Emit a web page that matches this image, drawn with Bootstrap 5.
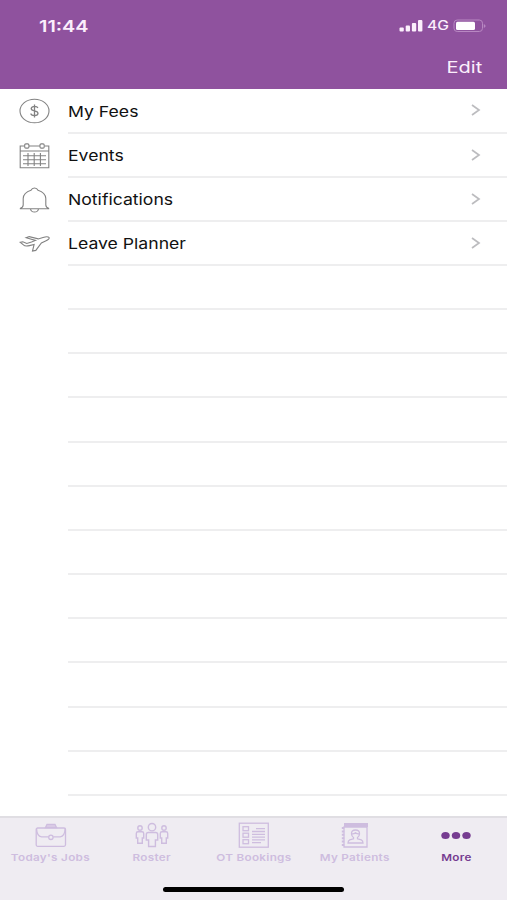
<!DOCTYPE html>
<html lang="en">
<head>
<meta charset="utf-8">
<meta name="viewport" content="width=device-width, initial-scale=1">
<title>More</title>
<link href="https://cdn.jsdelivr.net/npm/bootstrap@5.3.0/dist/css/bootstrap.min.css" rel="stylesheet">
<style>
  body { font-family: Inter, "Liberation Sans", sans-serif; background: #fff; }
  .screen { height: 900px; overflow: hidden; }
  .top-area { height: 89.4px; background: #8f529e; color: #fbeffc; flex: none; }
  .status { height: 52px; padding: 0 20px 0 39px; }
  .wide { display: inline-block; transform: scaleX(1.22); transform-origin: left center; white-space: nowrap; line-height: 1; }
  .clock { font-size: 16px; font-weight: 600; transform: scaleX(1.24); }
  .network { font-size: 12.5px; font-weight: 500; transform: scaleX(1.25); }
  .edit { font-size: 16.4px; transform-origin: right center; }
  .actions { height: 30px; padding-right: 25px; }
  .menu-row { height: 44.17px; flex: none; }
  .menu-icon { width: 68px; padding: 0 0 0 19px; flex: none; }
  .menu-cell { border-bottom: 2px solid #eeeeef; padding-right: 26px; }
  .menu-label { font-size: 15px; font-weight: 400; color: #111; transform: translateY(.6px) scaleX(1.175); }
  .tabs { height: 84px; background: #efecf2; border-top: 2px solid #e0dee3; color: #cebddf; flex: none; position: relative; }
  .tab { flex: 1 1 0; padding-top: 4px; text-decoration: none; color: inherit; }
  .tab-label { font-size: 9.6px; font-weight: 600; transform-origin: center; letter-spacing: .25px; margin-top: 4.4px; }
  .tab-on { color: #763c91; }
  .home-bar { position: absolute; left: 163px; bottom: 8px; width: 181px; height: 5px; border-radius: 3px; background: #000; }
  svg { display: block; fill: none; stroke: currentColor; }
  .menu-icon svg { color: #828282; stroke-width: 1.1; }
  .menu-cell .chev { color: #bcbcbf; stroke-width: 1.7; }
</style>
<script src="https://cdn.jsdelivr.net/npm/bootstrap@5.3.0/dist/js/bootstrap.bundle.min.js"></script>
</head>
<body>
<div class="screen d-flex flex-column">
  <header class="top-area">
    <div class="status d-flex align-items-center justify-content-between">
      <span class="wide clock">11:44</span>
      <div class="d-flex align-items-center">
        <svg width="24" height="14" viewBox="0 0 24 14" style="fill:currentColor;stroke:none"><rect x=".5" y="8.5" width="4.3" height="4" rx="1"/><rect x="6.7" y="6.5" width="4.3" height="6" rx="1"/><rect x="12.900" y="4" width="4.300" height="8.500" rx="1"/><rect x="19" y="1" width="4.400" height="11.500" rx="1"/></svg>
        <span class="wide network ms-1 me-2">4G</span>
        <svg width="34" height="14" viewBox="0 0 34 14"><rect x="1" y="1" width="28.500" height="11.500" rx="3.200" style="stroke:#b888c2"/><rect x="3" y="2.700" width="19" height="8.200" rx="1.500" style="fill:#fff;stroke:none"/><path d="M30.800 5v4q1.800-1 1.800-2t-1.800-2z" style="fill:#b888c2;stroke:none"/></svg>
      </div>
    </div>
    <div class="actions d-flex align-items-center justify-content-end"><span class="wide edit">Edit</span></div>
  </header>

  <main class="flex-grow-1 overflow-hidden d-flex flex-column">
    <div class="menu-row d-flex">
      <div class="menu-icon d-flex align-items-center">
        <svg width="31" height="26" viewBox="0 0 31 26"><ellipse cx="15.5" cy="13" rx="14.5" ry="11.8"/><path stroke-width="1.300" d="M18.900 10Q18.300 8.300 15.500 8.300T12.200 10.400Q12.200 12.200 15.500 12.800T19 15.300Q19 17.600 15.500 17.600T11.900 15.500M15.500 6.500v13"/></svg>
      </div>
      <div class="menu-cell flex-grow-1 d-flex align-items-center justify-content-between"><span class="wide menu-label">My Fees</span><svg class="chev" width="10" height="12" viewBox="0 0 10 12"><path d="M1 1l7 5-7 5"/></svg></div>
    </div>
    <div class="menu-row d-flex">
      <div class="menu-icon d-flex align-items-center">
        <svg width="31" height="26" viewBox="0 0 31 26"><path d="M5.500 3H1.200v21.800h28.600V3h-4.300M10 3h11M1.200 8h28.600M4 12.700h23M4 16.700h23M4 20.700h23M9 10v13M15.200 10v13M21.400 10v13"/><rect x="5.700" y=".9" width="4.200" height="4.200" rx="1.200"/><rect x="21" y=".9" width="4.200" height="4.200" rx="1.200"/></svg>
      </div>
      <div class="menu-cell flex-grow-1 d-flex align-items-center justify-content-between"><span class="wide menu-label">Events</span><svg class="chev" width="10" height="12" viewBox="0 0 10 12"><path d="M1 1l7 5-7 5"/></svg></div>
    </div>
    <div class="menu-row d-flex">
      <div class="menu-icon d-flex align-items-center">
        <svg width="31" height="26" viewBox="0 0 31 26"><path d="M.8 21.700h29.400M1 21.500q3.200-1 3.200-3.500v-6.500Q4.500 5.500 12 3.200q1-2.200 3.500-2.200T19 3.200q7.500 2.300 7.800 8.300V18q0 2.500 3.200 3.500M11.500 22q.5 3 4 3t4-3"/></svg>
      </div>
      <div class="menu-cell flex-grow-1 d-flex align-items-center justify-content-between"><span class="wide menu-label">Notifications</span><svg class="chev" width="10" height="12" viewBox="0 0 10 12"><path d="M1 1l7 5-7 5"/></svg></div>
    </div>
    <div class="menu-row d-flex">
      <div class="menu-icon d-flex align-items-center">
        <svg width="31" height="18" viewBox="0 0 31 18"><path d="M1.200 7.300l2.600-.5 4 1.700 4.700-1.400 4-1.700-9.300-2.700 3-1.100 9 2.300 4.800-1.500q4.600-1.400 6 0 1 1.800-3.400 3.700l-4.200 1.800-5.600 7.500-3.300.6 1.600-6.600-4.700 1.200q-4.300 1-6-.7z"/></svg>
      </div>
      <div class="menu-cell flex-grow-1 d-flex align-items-center justify-content-between"><span class="wide menu-label">Leave Planner</span><svg class="chev" width="10" height="12" viewBox="0 0 10 12"><path d="M1 1l7 5-7 5"/></svg></div>
    </div>
    <div class="menu-row d-flex"><div class="menu-icon"></div><div class="menu-cell flex-grow-1"></div></div>
    <div class="menu-row d-flex"><div class="menu-icon"></div><div class="menu-cell flex-grow-1"></div></div>
    <div class="menu-row d-flex"><div class="menu-icon"></div><div class="menu-cell flex-grow-1"></div></div>
    <div class="menu-row d-flex"><div class="menu-icon"></div><div class="menu-cell flex-grow-1"></div></div>
    <div class="menu-row d-flex"><div class="menu-icon"></div><div class="menu-cell flex-grow-1"></div></div>
    <div class="menu-row d-flex"><div class="menu-icon"></div><div class="menu-cell flex-grow-1"></div></div>
    <div class="menu-row d-flex"><div class="menu-icon"></div><div class="menu-cell flex-grow-1"></div></div>
    <div class="menu-row d-flex"><div class="menu-icon"></div><div class="menu-cell flex-grow-1"></div></div>
    <div class="menu-row d-flex"><div class="menu-icon"></div><div class="menu-cell flex-grow-1"></div></div>
    <div class="menu-row d-flex"><div class="menu-icon"></div><div class="menu-cell flex-grow-1"></div></div>
    <div class="menu-row d-flex"><div class="menu-icon"></div><div class="menu-cell flex-grow-1"></div></div>
    <div class="menu-row d-flex"><div class="menu-icon"></div><div class="menu-cell flex-grow-1"></div></div>
  </main>

  <nav class="tabs d-flex">
    <a class="tab d-flex flex-column align-items-center" href="#">
      <svg width="32" height="27" viewBox="0 0 32 27" stroke-width="1.300"><rect x="1.200" y="6" width="29.300" height="18.300" rx="1.500"/><path d="M1.500 6.500q.5 8 5 8.300h6.800M30.200 6.500q-.5 8-5 8.300h-6.800"/><path d="M10.500 5.500l1.500-3h8l1.500 3z" style="fill:currentColor;fill-opacity:.6"/><circle cx="15.900" cy="15.300" r="2.200"/></svg>
      <span class="wide tab-label">Today's Jobs</span>
    </a>
    <a class="tab d-flex flex-column align-items-center" href="#">
      <svg width="34" height="27" viewBox="0 0 34 27" stroke-width="1.400"><circle cx="17" cy="5.200" r="3.700"/><path d="M13.300 10.500h7.400q2 0 2 2v5.500h-2.300v6.500h-6.800V18h-2.300v-5.500q0-2 2-2z"/><circle cx="5" cy="6" r="2.200"/><path d="M3 9.800h4q1.700 0 1.700 1.700v4.500H7.300v5.200H2.700V16H1.300v-4.500q0-1.700 1.700-1.700z"/><circle cx="29" cy="6" r="2.200"/><path d="M27 9.800h4q1.700 0 1.700 1.700v4.500h-1.400v5.200h-4.600V16h-1.400v-4.500q0-1.700 1.700-1.700z"/></svg>
      <span class="wide tab-label">Roster</span>
    </a>
    <a class="tab d-flex flex-column align-items-center" href="#">
      <svg width="32" height="27" viewBox="0 0 32 27" stroke-width="1.300"><rect x="1.300" y="1.200" width="29" height="24"/><rect x="5" y="4.700" width="5.500" height="4"/><rect x="5" y="11.200" width="5.500" height="4"/><rect x="5" y="17.700" width="5.500" height="4"/><path d="M18 6.700h9M14 9.500h13M14 12.300h13M14 15.100h13M14 17.900h13M14 20.700h9"/></svg>
      <span class="wide tab-label">OT Bookings</span>
    </a>
    <a class="tab d-flex flex-column align-items-center" href="#">
      <svg width="28" height="27" viewBox="0 0 28 27" stroke-width="1.300"><path d="M3 5h23v20H3z"/><path d="M3 1h24v4H3z" style="fill:currentColor;stroke:none"/><path d="M2 5v20" stroke-width="2.400" stroke-dasharray="2 1.400"/><path d="M14.500 8q4.300 0 4 4-.2 2.500-2 3.500v1.300l3.800 1q1.700.7 1.700 3.200h-15q0-2.500 1.700-3.200l3.800-1v-1.300q-1.800-1-2-3.500-.3-4 4-4zM11 11.800q2 .2 3.500-1 1.500 1.200 3.500 1"/></svg>
      <span class="wide tab-label">My Patients</span>
    </a>
    <a class="tab tab-on d-flex flex-column align-items-center" href="#" aria-current="page">
      <svg width="32" height="27" viewBox="0 0 32 27" style="fill:currentColor;stroke:none"><ellipse cx="5.500" cy="13.500" rx="4.200" ry="3.500"/><ellipse cx="16" cy="13.500" rx="4.200" ry="3.500"/><ellipse cx="26.500" cy="13.500" rx="4.200" ry="3.500"/></svg>
      <span class="wide tab-label">More</span>
    </a>
    <div class="home-bar"></div>
  </nav>
</div>
</body>
</html>
